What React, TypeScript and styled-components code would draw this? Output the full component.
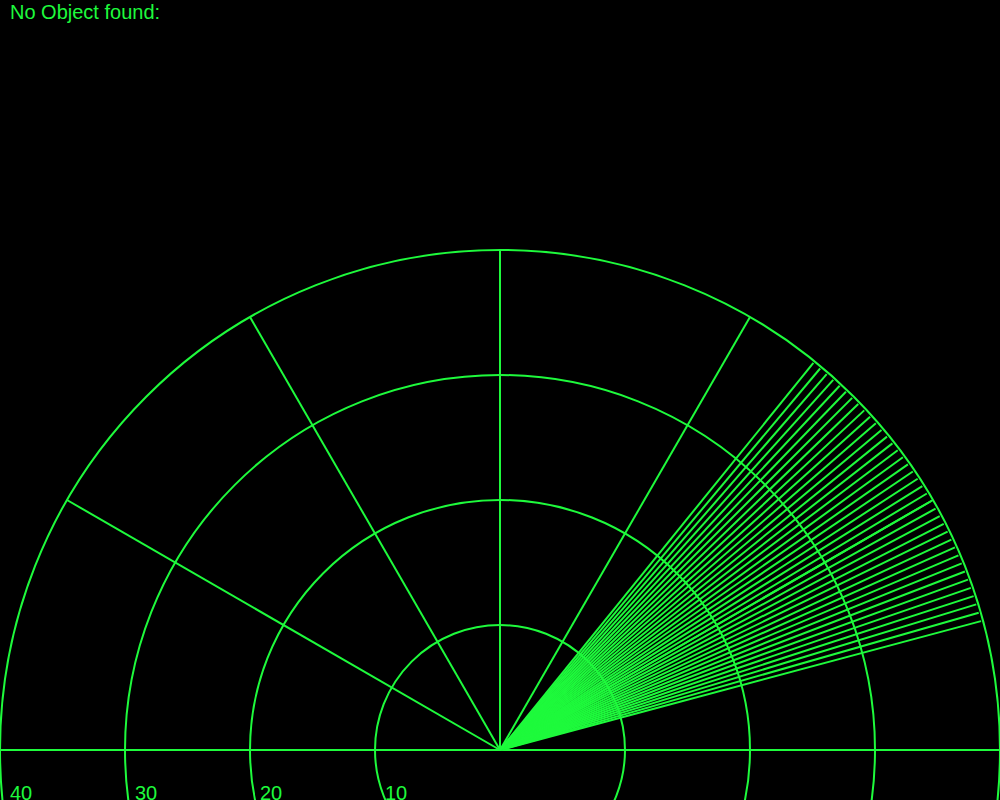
import React from "react";
import styled, { createGlobalStyle } from "styled-components";

const GREEN = "rgb(30,250,60)";

const Global = createGlobalStyle`
  html, body { margin: 0; padding: 0; background: #000; }
  body { font-family: "Liberation Sans", Arial, sans-serif; }
`;

const Screen = styled.div`
  width: 1000px;
  height: 800px;
  background: #000;
  display: flex;
  flex-direction: column;
  overflow: hidden;
`;

const Status = styled.div`
  height: 30px;
  flex: none;
  padding-left: 10px;
  box-sizing: border-box;
  color: ${GREEN};
  font-size: 20px;
  line-height: 20px;
  padding-top: 2px;
  font-family: "Liberation Sans", Arial, sans-serif;
`;

const Radar = styled.svg`
  display: block;
  width: 1000px;
  height: 770px;
  flex: none;
`;

const Label = styled.text`
  fill: ${GREEN};
  font-size: 20px;
  font-family: "Liberation Sans", Arial, sans-serif;
`;

const CX = 500;
const CY = 750;
const radii = [125, 250, 375, 500];
const spokes = [30, 60, 90, 120, 150];
const sweep = Array.from({ length: 37 }, (_, i) => 15 + i);
const labels = [
  { x: 10, t: "40" },
  { x: 135, t: "30" },
  { x: 260, t: "20" },
  { x: 385, t: "10" },
];

const pt = (deg: number, r: number) => {
  const a = (deg * Math.PI) / 180;
  return { x: CX + r * Math.cos(a), y: CY - r * Math.sin(a) };
};

export default function App() {
  return (
    <>
      <Global />
      <Screen>
        <Status>No Object found:</Status>
        <Radar viewBox="0 30 1000 770">
          <g stroke={GREEN} strokeWidth={2} fill="none">
            {radii.map((r) => (
              <circle key={r} cx={CX} cy={CY} r={r} />
            ))}
            <line x1={0} y1={CY} x2={1000} y2={CY} />
            {spokes.map((d) => {
              const p = pt(d, 500);
              return <line key={d} x1={CX} y1={CY} x2={p.x} y2={p.y} />;
            })}
            {sweep.map((d) => {
              const p = pt(d, 498);
              return <line key={"s" + d} x1={CX} y1={CY} x2={p.x} y2={p.y} />;
            })}
          </g>
          {labels.map((l) => (
            <Label key={l.t} x={l.x} y={800}>
              {l.t}
            </Label>
          ))}
        </Radar>
      </Screen>
    </>
  );
}
